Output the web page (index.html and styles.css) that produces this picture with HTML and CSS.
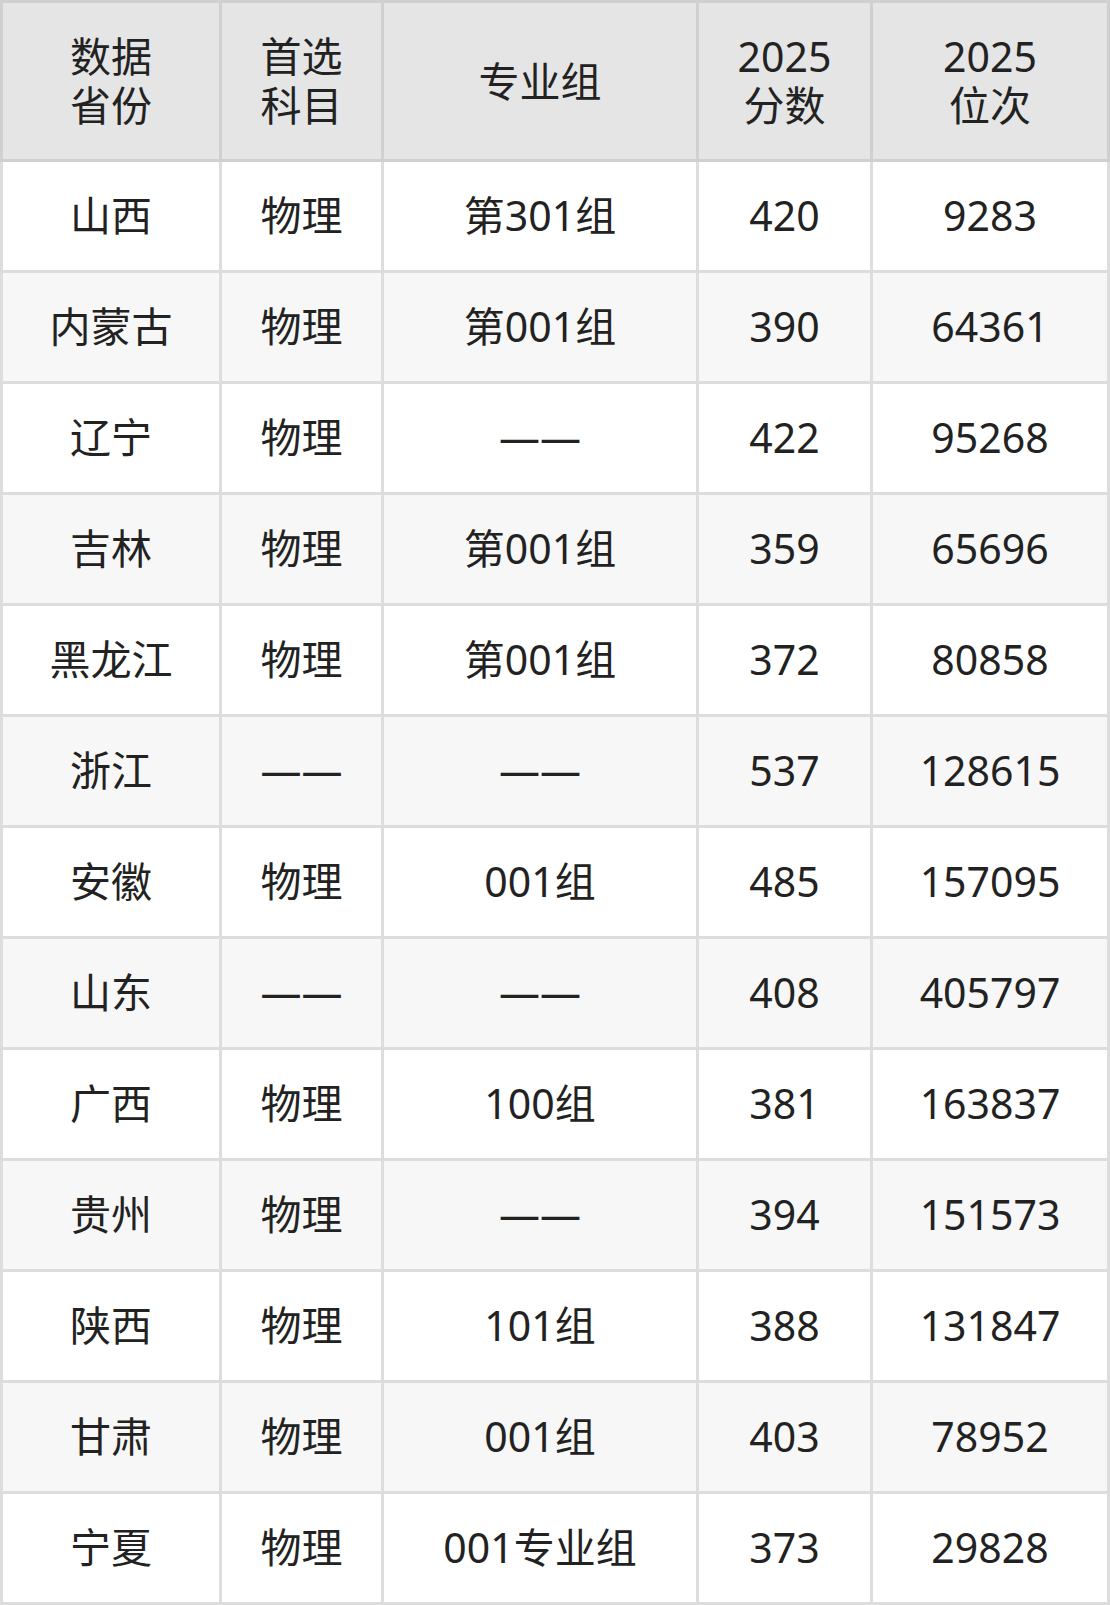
FILE: index.html
```html
<!DOCTYPE html>
<html lang="zh-CN">
<head>
<meta charset="utf-8">
<title>分数位次</title>
<link rel="stylesheet" href="styles.css">
</head>
<body>
<table class="score-table">
  <colgroup>
    <col class="c1"><col class="c2"><col class="c3"><col class="c4"><col class="c5">
  </colgroup>
  <thead>
    <tr>
      <th>数据<br>省份</th>
      <th>首选<br>科目</th>
      <th>专业组</th>
      <th>2025<br>分数</th>
      <th>2025<br>位次</th>
    </tr>
  </thead>
  <tbody>
    <tr><td>山西</td><td>物理</td><td>第301组</td><td>420</td><td>9283</td></tr>
    <tr><td>内蒙古</td><td>物理</td><td>第001组</td><td>390</td><td>64361</td></tr>
    <tr><td>辽宁</td><td>物理</td><td>——</td><td>422</td><td>95268</td></tr>
    <tr><td>吉林</td><td>物理</td><td>第001组</td><td>359</td><td>65696</td></tr>
    <tr><td>黑龙江</td><td>物理</td><td>第001组</td><td>372</td><td>80858</td></tr>
    <tr><td>浙江</td><td>——</td><td>——</td><td>537</td><td>128615</td></tr>
    <tr><td>安徽</td><td>物理</td><td>001组</td><td>485</td><td>157095</td></tr>
    <tr><td>山东</td><td>——</td><td>——</td><td>408</td><td>405797</td></tr>
    <tr><td>广西</td><td>物理</td><td>100组</td><td>381</td><td>163837</td></tr>
    <tr><td>贵州</td><td>物理</td><td>——</td><td>394</td><td>151573</td></tr>
    <tr><td>陕西</td><td>物理</td><td>101组</td><td>388</td><td>131847</td></tr>
    <tr><td>甘肃</td><td>物理</td><td>001组</td><td>403</td><td>78952</td></tr>
    <tr><td>宁夏</td><td>物理</td><td>001专业组</td><td>373</td><td>29828</td></tr>
  </tbody>
</table>
</body>
</html>
```

FILE: styles.css
```css
html, body {
  margin: 0;
  padding: 0;
  background: #ffffff;
}

.score-table {
  width: 1110px;
  table-layout: fixed;
  border-collapse: separate;
  border-spacing: 0;
  font-family: "Noto Sans", "Noto Sans CJK SC", sans-serif;
  font-size: 41px;
  color: #222222;
}

.c1 { width: 222px; }
.c2 { width: 162px; }
.c3 { width: 315px; }
.c4 { width: 174px; }
.c5 { width: 237px; }

.score-table th,
.score-table td {
  box-sizing: border-box;
  padding: 0;
  text-align: center;
  vertical-align: middle;
  font-weight: 400;
  white-space: nowrap;
}

.score-table th {
  height: 162px;
  line-height: 49px;
  background: #e5e5e5;
  border-top: 3px solid #d0d0d0;
  border-right: 3px solid #d0d0d0;
  border-bottom: 3px solid #d0d0d0;
}

.score-table th:first-child {
  border-left: 3px solid #d0d0d0;
}

.score-table td {
  height: 111px;
  line-height: 1.2;
  border-right: 3px solid #dddddd;
  border-bottom: 3px solid #dddddd;
  background: #ffffff;
}

.score-table td:first-child {
  border-left: 3px solid #dddddd;
}

.score-table tbody tr:nth-child(even) td {
  background: #f7f7f7;
}
```
